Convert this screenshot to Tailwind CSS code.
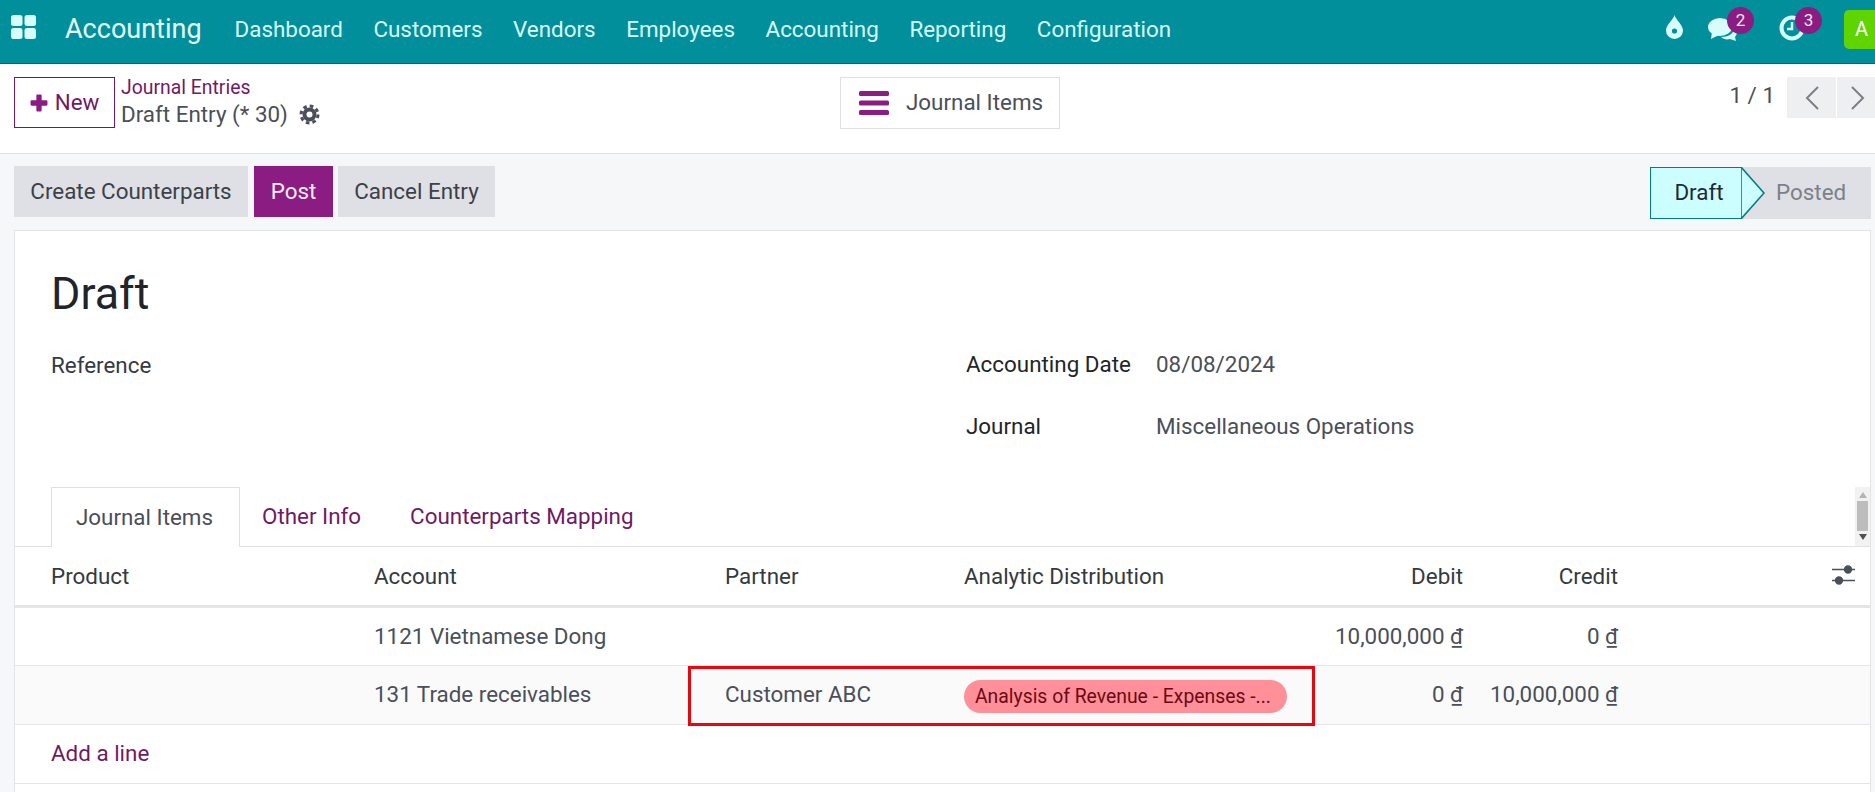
<!doctype html>
<html lang="en">
<head>
  <meta charset="UTF-8">
  <script src="https://cdn.jsdelivr.net/npm/@tailwindcss/browser@4"></script>
  <title>Draft Entry</title>
</head>
<body class="font-['Roboto',sans-serif] text-[22.4px] text-[#4a4f59] bg-[#f6f7f9] overflow-hidden">
<div class="relative w-[1875px] h-[792px] overflow-hidden">

  <!-- top bar -->
  <header class="flex items-center h-[64px] bg-[#018f9b] border-b border-[#016a73] text-[#d8fbfb]">
    <svg class="ml-[11px] w-[26px] h-[26px] -mt-[10px]" viewBox="0 0 26 26" fill="#d8fbfb">
      <rect x="0" y="1" width="11.5" height="11" rx="2.5"/><rect x="13.5" y="1" width="11.5" height="11" rx="2.5"/>
      <rect x="0" y="14" width="11.5" height="11" rx="2.5"/><rect x="13.5" y="14" width="11.5" height="11" rx="2.5"/>
    </svg>
    <span class="ml-[28px] text-[27px] text-[#e6fcfc] -mt-[5px]">Accounting</span>
    <nav class="flex ml-[33px] gap-[30.6px] -mt-[4px]">
      <span>Dashboard</span><span>Customers</span><span>Vendors</span><span>Employees</span><span>Accounting</span><span>Reporting</span><span>Configuration</span>
    </nav>
    <div class="ml-auto flex items-center h-full">
      <svg class="w-[17px] h-[24px] mr-[25px] -mt-[9px]" viewBox="0 0 17 24" fill="#d8fbfb"><path d="M8.5 0C10 5 17 10 17 15.5a8.5 8.5 0 0 1-17 0C0 10 7 5 8.5 0z"/><circle cx="8.5" cy="16" r="2.6" fill="#018f9b"/></svg>
      <div class="relative w-[48px] h-full mr-[23px]">
        <svg class="absolute left-0 top-[18px] w-[30px] h-[24px]" viewBox="0 0 30 24" fill="#d8fbfb"><ellipse cx="12" cy="9" rx="12" ry="9"/><path d="M4 14l-1 7 8-4z"/><path d="M26 10c3 2 4 6 1 9l1 4-6-2c-3 1-7 0-9-2 7 0 13-3 13-9z"/></svg>
        <span class="absolute left-[19px] top-[7px] flex items-center justify-center w-[27px] h-[27px] rounded-full bg-[#8b1c82] text-[17px] text-[#f3e6f2]">2</span>
      </div>
      <div class="relative w-[38px] h-full mr-[27px]">
        <svg class="absolute left-0 top-[15px] w-[26px] h-[26px]" viewBox="0 0 26 26" fill="none" stroke="#d8fbfb"><circle cx="13" cy="13" r="10.5" stroke-width="4"/><path d="M13 7v7H8" stroke-width="2.5"/></svg>
        <span class="absolute left-[16px] top-[7px] flex items-center justify-center w-[27px] h-[27px] rounded-full bg-[#8b1c82] text-[17px] text-[#f3e6f2]">3</span>
      </div>
      <span class="flex items-center pl-[11px] w-[31px] h-[39px] rounded-l-[5px] bg-[#5fd400] text-white text-[20px] -mt-[5px]">A</span>
    </div>
  </header>

  <!-- control panel -->
  <div class="flex h-[90px] bg-white border-b border-[#dfe1e4] pt-[13px]">
    <div class="flex w-[840px] pl-[14px]">
      <button class="flex items-center justify-center gap-[7px] w-[101px] h-[51px] border border-[#701a66] text-[#701a66]">
        <svg class="w-[18px] h-[18px]" viewBox="0 0 17 17" fill="#8b1c82"><path d="M6 1.5a1 1 0 0 1 1-1h3a1 1 0 0 1 1 1V6h4.500a1 1 0 0 1 1 1v3a1 1 0 0 1-1 1H11v4.500a1 1 0 0 1-1 1H7a1 1 0 0 1-1-1V11H1.500a1 1 0 0 1-1-1V7a1 1 0 0 1 1-1H6z"/></svg>
        New
      </button>
      <div class="ml-[6px] -mt-[1px]">
        <div class="text-[#701a66] text-[19.4px] leading-[24px]">Journal Entries</div>
        <div class="flex items-center gap-[11px] leading-[28px]">Draft Entry (* 30)
          <svg class="w-[21px] h-[21px]" viewBox="0 0 21 21" fill="none" stroke="#4a4f59"><circle cx="10.500" cy="10.500" r="5" stroke-width="4"/><circle cx="10.500" cy="10.500" r="8.500" stroke-width="3" stroke-dasharray="3.600 3.075"/></svg>
        </div>
      </div>
    </div>
    <button class="flex items-center w-[220px] h-[52px] border border-[#dee0e3] pl-[18px] gap-[17px]">
      <svg class="w-[30px] h-[26px]" viewBox="0 0 30 26" fill="#8b1c82"><rect y="1" width="30" height="5" rx="1.500"/><rect y="10.500" width="30" height="5" rx="1.500"/><rect y="20" width="30" height="5" rx="1.500"/></svg>
      Journal Items
    </button>
    <div class="ml-auto flex h-[41px]">
      <span class="leading-[37px] mr-[12px]">1 / 1</span>
      <span class="flex items-center justify-center w-[49px] bg-[#eeeff1]"><svg class="w-[14px] h-[24px]" viewBox="0 0 14 24" fill="none" stroke="#7b7f87" stroke-width="2"><path d="M13 1L2 12l11 11"/></svg></span>
      <span class="flex items-center justify-center w-[38px] ml-[1px] bg-[#eeeff1] pl-[3px]"><svg class="w-[14px] h-[24px]" viewBox="0 0 14 24" fill="none" stroke="#7b7f87" stroke-width="2"><path d="M1 1l11 11L1 23"/></svg></span>
    </div>
  </div>

  <!-- action row -->
  <div class="flex h-[76px] pl-[14px] pr-[4px] pt-[12px]">
    <button class="w-[234px] h-[51px] bg-[#dee0e5] text-[#3c4049]">Create Counterparts</button>
    <button class="w-[79px] h-[51px] ml-[6px] bg-[#8b1c82] text-[#f6ecf5]">Post</button>
    <button class="w-[157px] h-[51px] ml-[5px] bg-[#dee0e5] text-[#3c4049]">Cancel Entry</button>
    <div class="ml-auto flex h-[52px] mt-[1px]">
      <div class="relative flex items-center justify-center w-[92px] border border-r-0 border-[#017e84] bg-[#ccfdff] text-[#1f2a37] pl-[5px]">
        Draft
        <svg class="absolute top-[-1px] left-[90px] w-[24px] h-[52px]" viewBox="0 0 24 52"><path d="M0 0l23 26L0 52z" fill="#ccfdff" stroke="#017e84" stroke-width="1.600"/></svg>
      </div>
      <div class="flex items-center w-[129px] pl-[34px] bg-[#dee0e5] text-[#7c8089]">Posted</div>
    </div>
  </div>

  <!-- sheet -->
  <main class="ml-[14px] mr-[4px] h-[562px] bg-white border border-[#e2e4e7] border-b-0">
    <h1 class="pl-[36px] pt-[38px] text-[44.8px] leading-[50px] text-[#212529]">Draft</h1>
    <div class="flex pl-[36px] pt-[30px] h-[147px] text-[#343a40]">
      <div class="w-[915px]">Reference</div>
      <div class="flex-1">
        <div class="grid grid-cols-[190px_1fr] gap-y-[36px] leading-[26px] pt-[2px]">
          <span class="text-[#212529]">Accounting Date</span><span class="text-[#4a4f59]">08/08/2024</span>
          <span class="text-[#212529]">Journal</span><span class="text-[#4a4f59]">Miscellaneous Operations</span>
        </div>
      </div>
    </div>

    <!-- tabs -->
    <div class="relative flex mt-[21px] h-[60px] pl-[36px] border-b border-[#dee0e3] text-[#701a66]">
      <span class="flex items-center justify-center w-[189px] h-[60px] pr-[2px] bg-white border border-b-0 border-[#dee0e3] text-[#4a4f59]">Journal Items</span>
      <span class="flex items-center pl-[22px] pr-[23px]">Other Info</span>
      <span class="flex items-center px-[26px]">Counterparts Mapping</span>
      <div class="absolute right-0 top-0 flex flex-col items-center w-[15px] h-[59px] bg-[#f2f2f2]">
        <svg class="w-[8px] h-[6px] mt-[5px]" viewBox="0 0 8 6" fill="#b4b4b4"><path d="M4 0l4 6H0z"/></svg>
        <span class="w-[11px] h-[30px] mt-[3px] bg-[#bdbdbd]"></span>
        <svg class="w-[8px] h-[6px] mt-[3px]" viewBox="0 0 8 6" fill="#505050"><path d="M0 0h8L4 6z"/></svg>
      </div>
    </div>

    <!-- lines table -->
    <div class="grid grid-cols-[359px_352px_238px_336px_163px_155px_214px_1fr] items-center h-[61px] pt-[1px] border-b-[3px] border-[#e3e5e8] text-[#343a40]">
      <span class="pl-[36px]">Product</span><span>Account</span><span class="-ml-[1px]">Partner</span><span>Analytic Distribution</span>
      <span class="text-right">Debit</span><span class="text-right">Credit</span><span></span>
      <svg class="w-[23px] h-[20px] -mt-[4px]" viewBox="0 0 23 20" stroke="#4a4f59" fill="#4a4f59" stroke-width="1.500"><path d="M0 4.500h23M0 15.500h23"/><circle cx="16" cy="4.500" r="3.400"/><circle cx="7" cy="15.500" r="3.400"/></svg>
    </div>
    <div class="grid grid-cols-[359px_352px_238px_336px_163px_155px_214px_1fr] items-center h-[58px] border-b border-[#e3e5e8]">
      <span></span><span>1121 Vietnamese Dong</span><span></span><span></span>
      <span class="text-right">10,000,000 <u>₫</u></span><span class="text-right">0 <u>₫</u></span><span></span><span></span>
    </div>
    <div class="grid grid-cols-[359px_352px_238px_336px_163px_155px_214px_1fr] items-center h-[59px] border-b border-[#e3e5e8] bg-[#fafafa]">
      <span></span><span>131 Trade receivables</span><span class="-ml-[1px]">Customer ABC</span>
      <span class="flex items-center w-[323px] h-[33px] pl-[11px] pt-[1px] rounded-full bg-[#ff8f98] text-[19.35px] text-[#6b0a14] mt-[2px] whitespace-nowrap">Analysis of Revenue - Expenses -...</span>
      <span class="text-right">0 <u>₫</u></span><span class="text-right">10,000,000 <u>₫</u></span><span></span><span></span>
    </div>
    <div class="flex items-center h-[59px] pl-[36px] border-b border-[#e3e5e8] text-[#701a66]">Add a line</div>
  </main>

  <!-- red highlight drawn over the row -->
  <div class="absolute left-[688px] top-[666px] w-[627px] h-[60px] border-[3px] border-[#e8070f]"></div>
</div>
</body>
</html>
